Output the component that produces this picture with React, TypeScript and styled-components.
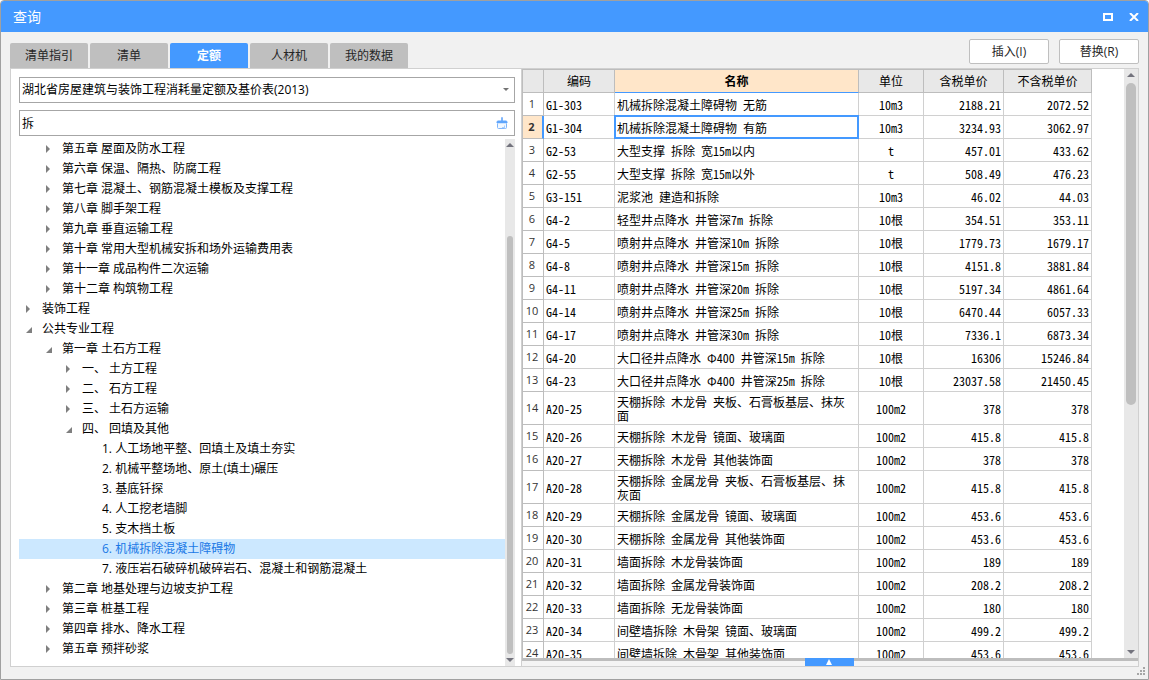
import React, { useState } from "react";
import styled, { createGlobalStyle, css } from "styled-components";

const BLUE = "#4499ff";
const uiFont = `"Open Sans", "Noto Sans CJK SC", sans-serif`;
const gridFont = `"Noto Sans CJK SC", sans-serif`;

const GlobalStyle = createGlobalStyle`
  *, *::before, *::after { box-sizing: border-box; }
  body { margin: 0; background: #fff; font: 12px/20px ${uiFont}; color: #000; }
  button, input, select { font: inherit; color: inherit; margin: 0; }
  ul { list-style: none; margin: 0; padding: 0; }
`;

const Window = styled.div`
  display: flex;
  flex-direction: column;
  height: 100vh;
  border: 1px solid #a0a0a0;
  border-radius: 4px 4px 0 0;
  background: #f1f1f1;
  overflow: hidden;
`;

const TitleBar = styled.header`
  display: flex;
  flex: none;
  align-items: center;
  justify-content: space-between;
  height: 31px;
  padding: 0 6px 0 12px;
  background: ${BLUE};
  color: #fff;
`;

const Title = styled.h1`
  margin: 0;
  font-size: 14px;
  font-weight: 400;
`;

const TitleButtons = styled.div`
  display: flex;
  gap: 10px;
`;

const TitleButton = styled.button`
  display: grid;
  place-items: center;
  width: 16px;
  height: 16px;
  padding: 0;
  border: 0;
  background: none;
`;

const Toolbar = styled.div`
  display: flex;
  flex: none;
  justify-content: space-between;
  align-items: flex-end;
  height: 36px;
  padding: 0 9px;
`;

const Tabs = styled.div`
  display: flex;
  gap: 2px;
`;

const Tab = styled.button<{ $active?: boolean }>`
  width: 78px;
  height: 25px;
  padding: 0;
  border: 0;
  border-radius: 2px 2px 0 0;
  background: ${(p) => (p.$active ? BLUE : "#bfbfbf")};
  color: ${(p) => (p.$active ? "#fff" : "#262626")};
  font-weight: ${(p) => (p.$active ? 700 : 400)};
`;

const Actions = styled.div`
  display: flex;
  gap: 10px;
  padding-bottom: 4px;
`;

const ActionButton = styled.button`
  width: 80px;
  height: 25px;
  padding: 0;
  border: 1px solid #bfbfbf;
  border-radius: 2px;
  background: #fff;
  color: #262626;
`;

const Content = styled.main`
  display: grid;
  grid-template-columns: 510px minmax(0, 1fr);
  flex: 1;
  min-height: 0;
  margin: 0 9px;
  border: 1px solid #d0d0d0;
  background: #fff;
`;

const SidePane = styled.section`
  display: flex;
  flex-direction: column;
  min-height: 0;
  padding: 8px 6px 0 8px;
`;

const Field = styled.div`
  display: flex;
  position: relative;
  flex: none;
  align-items: center;
  height: 26px;
  margin-bottom: 7px;
  border: 1px solid #a6a6a6;
`;

const Select = styled.select`
  appearance: none;
  width: 100%;
  height: 24px;
  padding: 0 20px 0 2px;
  border: 0;
  background: none;
  outline: 0;
`;

const SelectArrow = styled.svg`
  position: absolute;
  right: 5px;
  pointer-events: none;
`;

const SearchInput = styled.input`
  flex: 1;
  min-width: 0;
  height: 24px;
  padding: 0 2px;
  border: 0;
  background: none;
  outline: 0;
`;

const ClearButton = styled.button`
  display: grid;
  place-items: center;
  width: 24px;
  height: 24px;
  padding: 0;
  border: 0;
  background: none;
`;

const TreeArea = styled.div`
  display: flex;
  flex: 1;
  min-height: 0;
  margin-top: -4px;
`;

const Tree = styled.ul`
  flex: 1;
  min-width: 0;
  overflow: hidden;
`;

const TreeItem = styled.li<{ $level: number; $selected: boolean }>`
  display: flex;
  height: 20px;
  padding-left: ${(p) => 3 + p.$level * 20}px;
  white-space: pre;
  ${(p) =>
    p.$selected &&
    css`
      background: #cce8ff;
      color: #1a78e6;
    `}
`;

const Toggle = styled.button`
  width: 20px;
  height: 20px;
  padding: 0;
  border: 0;
  background: none;
  line-height: 0;
`;

const ToggleSpace = styled.span`
  width: 20px;
`;

const ScrollTrack = styled.div<{ $width: number }>`
  display: flex;
  flex: none;
  flex-direction: column;
  align-items: center;
  justify-content: space-between;
  width: ${(p) => p.$width}px;
  background: #e8e8e8;
`;

const ScrollRail = styled.div<{ $before: number; $thumb: number; $after: number }>`
  display: grid;
  flex: 1;
  grid-template-rows: ${(p) => `${p.$before}fr ${p.$thumb}fr ${p.$after}fr`};
`;

const ScrollThumb = styled.div<{ $width: number }>`
  grid-row: 2;
  width: ${(p) => p.$width}px;
  border-radius: 5px;
  background: #bfbfbf;
`;

const GridPane = styled.section`
  display: flex;
  flex-direction: column;
  min-width: 0;
  min-height: 0;
  border-left: 1px solid #d0d0d0;
`;

const GridArea = styled.div`
  display: flex;
  flex: 1;
  min-height: 0;
  overflow: hidden;
`;

const TableClip = styled.div`
  flex: 1;
  min-width: 0;
  overflow: hidden;
`;

const Table = styled.table`
  width: 570px;
  table-layout: fixed;
  border-collapse: separate;
  border-spacing: 0;
  border-top: 1px solid #bdbdbd;
  border-left: 1px solid #bdbdbd;
  font: 12px/14px ${gridFont};
  font-feature-settings: "hwid" 1;
`;

const HeadCell = styled.th<{ $current?: boolean }>`
  height: 23px;
  padding: 0;
  border-right: 1px solid #bdbdbd;
  border-bottom: 1px solid ${(p) => (p.$current ? BLUE : "#bdbdbd")};
  background: ${(p) => (p.$current ? "#ffe6c9" : "#e8e8e8")};
  font-weight: ${(p) => (p.$current ? 700 : 400)};
`;

const RowHead = styled.th<{ $current: boolean }>`
  padding: 0 2px 0 0;
  border-right: 1px solid #bdbdbd;
  border-bottom: 1px solid #bdbdbd;
  background: #fff;
  color: #333;
  font: 11px/14px ${uiFont};
  ${(p) =>
    p.$current &&
    css`
      border-right: 2px solid ${BLUE};
      background: #ffe6c9;
      font-weight: 700;
    `}
`;

const Cell = styled.td<{ $align?: "center" | "right"; $current?: boolean }>`
  height: 23px;
  padding: 1px 2px 0;
  border-right: 1px solid #d0d0d0;
  border-bottom: 1px solid #d0d0d0;
  text-align: ${(p) => p.$align ?? "left"};
  ${(p) =>
    p.$current &&
    css`
      position: relative;
      &::after {
        content: "";
        position: absolute;
        inset: -1px;
        border: 2px solid ${BLUE};
      }
    `}
`;

const BodyRow = styled.tr<{ $tall: boolean }>`
  height: ${(p) => (p.$tall ? 33 : 23)}px;
`;

const Drawer = styled.div`
  display: flex;
  flex: none;
  justify-content: center;
  height: 8px;
  padding-right: 2px;
  background: linear-gradient(#bdbdbd 3px, #f4f4f4 3px);
`;

const DrawerButton = styled.button`
  width: 49px;
  height: 8px;
  padding: 0;
  border: 0;
  background: ${BLUE};
  line-height: 0;
`;

const DrawerArrow = styled.svg`
  display: block;
  margin: 0 auto;
`;

const StatusBar = styled.footer`
  display: flex;
  flex: none;
  justify-content: flex-end;
  height: 12px;
  padding: 0 2px;
`;

type Node = { text: string; level: number; state: "open" | "closed" | "leaf" };

const n = (level: number, state: Node["state"], text: string): Node => ({ level, state, text });

const nodes: Node[] = [
  n(1, "closed", "第五章 屋面及防水工程"),
  n(1, "closed", "第六章 保温、隔热、防腐工程"),
  n(1, "closed", "第七章 混凝土、钢筋混凝土模板及支撑工程"),
  n(1, "closed", "第八章 脚手架工程"),
  n(1, "closed", "第九章 垂直运输工程"),
  n(1, "closed", "第十章 常用大型机械安拆和场外运输费用表"),
  n(1, "closed", "第十一章 成品构件二次运输"),
  n(1, "closed", "第十二章 构筑物工程"),
  n(0, "closed", "装饰工程"),
  n(0, "open", "公共专业工程"),
  n(1, "open", "第一章 土石方工程"),
  n(2, "closed", "一、 土方工程"),
  n(2, "closed", "二、 石方工程"),
  n(2, "closed", "三、 土石方运输"),
  n(2, "open", "四、 回填及其他"),
  n(3, "leaf", "1. 人工场地平整、回填土及填土夯实"),
  n(3, "leaf", "2. 机械平整场地、原土(填土)碾压"),
  n(3, "leaf", "3. 基底钎探"),
  n(3, "leaf", "4. 人工挖老墙脚"),
  n(3, "leaf", "5. 支木挡土板"),
  n(3, "leaf", "6. 机械拆除混凝土障碍物"),
  n(3, "leaf", "7. 液压岩石破碎机破碎岩石、混凝土和钢筋混凝土"),
  n(1, "closed", "第二章 地基处理与边坡支护工程"),
  n(1, "closed", "第三章 桩基工程"),
  n(1, "closed", "第四章 排水、降水工程"),
  n(1, "closed", "第五章 预拌砂浆"),
];

const rows: [string, string, string, string, string][] = [
  ["G1-303", "机械拆除混凝土障碍物 无筋", "10m3", "2188.21", "2072.52"],
  ["G1-304", "机械拆除混凝土障碍物 有筋", "10m3", "3234.93", "3062.97"],
  ["G2-53", "大型支撑 拆除 宽15m以内", "t", "457.01", "433.62"],
  ["G2-55", "大型支撑 拆除 宽15m以外", "t", "508.49", "476.23"],
  ["G3-151", "泥浆池 建造和拆除", "10m3", "46.02", "44.03"],
  ["G4-2", "轻型井点降水 井管深7m 拆除", "10根", "354.51", "353.11"],
  ["G4-5", "喷射井点降水 井管深10m 拆除", "10根", "1779.73", "1679.17"],
  ["G4-8", "喷射井点降水 井管深15m 拆除", "10根", "4151.8", "3881.84"],
  ["G4-11", "喷射井点降水 井管深20m 拆除", "10根", "5197.34", "4861.64"],
  ["G4-14", "喷射井点降水 井管深25m 拆除", "10根", "6470.44", "6057.33"],
  ["G4-17", "喷射井点降水 井管深30m 拆除", "10根", "7336.1", "6873.34"],
  ["G4-20", "大口径井点降水 Φ400 井管深15m 拆除", "10根", "16306", "15246.84"],
  ["G4-23", "大口径井点降水 Φ400 井管深25m 拆除", "10根", "23037.58", "21450.45"],
  ["A20-25", "天棚拆除 木龙骨 夹板、石膏板基层、抹灰面", "100m2", "378", "378"],
  ["A20-26", "天棚拆除 木龙骨 镜面、玻璃面", "100m2", "415.8", "415.8"],
  ["A20-27", "天棚拆除 木龙骨 其他装饰面", "100m2", "378", "378"],
  ["A20-28", "天棚拆除 金属龙骨 夹板、石膏板基层、抹灰面", "100m2", "415.8", "415.8"],
  ["A20-29", "天棚拆除 金属龙骨 镜面、玻璃面", "100m2", "453.6", "453.6"],
  ["A20-30", "天棚拆除 金属龙骨 其他装饰面", "100m2", "453.6", "453.6"],
  ["A20-31", "墙面拆除 木龙骨装饰面", "100m2", "189", "189"],
  ["A20-32", "墙面拆除 金属龙骨装饰面", "100m2", "208.2", "208.2"],
  ["A20-33", "墙面拆除 无龙骨装饰面", "100m2", "180", "180"],
  ["A20-34", "间壁墙拆除 木骨架 镜面、玻璃面", "100m2", "499.2", "499.2"],
  ["A20-35", "间壁墙拆除 木骨架 其他装饰面", "100m2", "453.6", "453.6"],
];

const tabs = ["清单指引", "清单", "定额", "人材机", "我的数据"];

function ScrollBar({ width, thumb, parts }: { width: number; thumb: number; parts: [number, number, number] }) {
  return (
    <ScrollTrack $width={width} aria-hidden="true">
      <svg width="10" height="13" viewBox="0 0 10 13">
        <path d="M1 8 5 4l4 4z" fill="#73737d" />
      </svg>
      <ScrollRail $before={parts[0]} $thumb={parts[1]} $after={parts[2]}>
        <ScrollThumb $width={thumb} />
      </ScrollRail>
      <svg width="10" height="12" viewBox="0 0 10 12">
        <path d="M1 4h8L5 8z" fill="#73737d" />
      </svg>
    </ScrollTrack>
  );
}

export default function App() {
  const [tab, setTab] = useState("定额");
  const [query, setQuery] = useState("拆");
  const [node, setNode] = useState(20);
  const [row, setRow] = useState(1);

  return (
    <>
      <GlobalStyle />
      <Window>
        <TitleBar>
          <Title>查询</Title>
          <TitleButtons>
            <TitleButton aria-label="最大化">
              <svg width="10" height="8" viewBox="0 0 10 8">
                <path d="M1 1h8v6H1z" fill="none" stroke="#fff" strokeWidth="2" />
              </svg>
            </TitleButton>
            <TitleButton aria-label="关闭">
              <svg width="10" height="8" viewBox="0 0 10 8">
                <path d="M1 0 9 8M9 0 1 8" stroke="#fff" strokeWidth="2" />
              </svg>
            </TitleButton>
          </TitleButtons>
        </TitleBar>
        <Toolbar>
          <Tabs role="tablist">
            {tabs.map((t) => (
              <Tab key={t} role="tab" aria-selected={t === tab} $active={t === tab} onClick={() => setTab(t)}>
                {t}
              </Tab>
            ))}
          </Tabs>
          <Actions>
            <ActionButton>插入(I)</ActionButton>
            <ActionButton>替换(R)</ActionButton>
          </Actions>
        </Toolbar>
        <Content>
          <SidePane>
            <Field>
              <Select aria-label="定额库">
                <option>湖北省房屋建筑与装饰工程消耗量定额及基价表(2013)</option>
              </Select>
              <SelectArrow width="6" height="4" viewBox="0 0 6 4">
                <path d="M0 0h6L3 3z" fill="#737373" />
              </SelectArrow>
            </Field>
            <Field>
              <SearchInput aria-label="搜索" value={query} onChange={(e) => setQuery(e.target.value)} />
              <ClearButton aria-label="清除" onClick={() => setQuery("")}>
                <svg width="12" height="14" viewBox="0 0 12 14" fill="none">
                  <path d="M5 5V2a1 1 0 0 1 2 0v3z" fill="#80b6fb" />
                  <path d="M1 7V6q0-1 1-1h8q1 0 1 1v1z" fill="#5ea5fc" stroke="#5ea5fc" />
                  <path d="M1.5 7.5v4q0 1 1 1h7q1 0 1-1v-4" fill="#f2f8ff" stroke="#80b6fb" />
                  <path d="M8.5 9.5v3M6 11.5h2" stroke="#a9cffd" />
                </svg>
              </ClearButton>
            </Field>
            <TreeArea>
              <Tree role="tree" aria-label="章节">
                {nodes.map((item, i) => (
                  <TreeItem
                    key={i}
                    role="treeitem"
                    aria-selected={i === node}
                    $level={item.level}
                    $selected={i === node}
                    onClick={() => setNode(i)}
                  >
                    {item.state === "leaf" ? (
                      <ToggleSpace />
                    ) : (
                      <Toggle aria-label={item.state === "open" ? "折叠" : "展开"}>
                        <svg width="20" height="20" viewBox="0 0 20 20">
                          <path d={item.state === "open" ? "M10 8v6H4z" : "M4 6v8l4-4z"} fill="#7f7f7f" />
                        </svg>
                      </Toggle>
                    )}
                    {item.text}
                  </TreeItem>
                ))}
              </Tree>
              <ScrollBar width={10} thumb={6} parts={[84, 418, 0]} />
            </TreeArea>
          </SidePane>
          <GridPane>
            <GridArea>
              <TableClip>
                <Table>
                  <colgroup>
                    <col width="21" />
                    <col width="71" />
                    <col width="244" />
                    <col width="65" />
                    <col width="80" />
                    <col width="88" />
                  </colgroup>
                  <thead>
                    <tr>
                      <HeadCell aria-label="序号" />
                      <HeadCell>编码</HeadCell>
                      <HeadCell $current>名称</HeadCell>
                      <HeadCell>单位</HeadCell>
                      <HeadCell>含税单价</HeadCell>
                      <HeadCell>不含税单价</HeadCell>
                    </tr>
                  </thead>
                  <tbody>
                    {rows.map(([code, name, unit, taxed, untaxed], i) => (
                      <BodyRow key={code} $tall={name.length > 20 && name.includes("抹灰")} onClick={() => setRow(i)}>
                        <RowHead scope="row" $current={i === row}>
                          {i + 1}
                        </RowHead>
                        <Cell>{code}</Cell>
                        <Cell $current={i === row}>{name}</Cell>
                        <Cell $align="center">{unit}</Cell>
                        <Cell $align="right">{taxed}</Cell>
                        <Cell $align="right">{untaxed}</Cell>
                      </BodyRow>
                    ))}
                  </tbody>
                </Table>
              </TableClip>
              <ScrollBar width={14} thumb={10} parts={[1, 322, 241]} />
            </GridArea>
            <Drawer>
              <DrawerButton aria-label="展开详情">
                <DrawerArrow width="6" height="6" viewBox="0 0 6 6">
                  <path d="M3 0 6 6H0z" fill="#fff" />
                </DrawerArrow>
              </DrawerButton>
            </Drawer>
          </GridPane>
        </Content>
        <StatusBar>
          <svg width="9" height="9" viewBox="0 0 9 9" fill="#a6a6a6">
            <path d="M6 0h2v2H6zM3 3h2v2H3zM6 3h2v2H6zM0 6h2v2H0zM3 6h2v2H3zM6 6h2v2H6z" />
          </svg>
        </StatusBar>
      </Window>
    </>
  );
}
